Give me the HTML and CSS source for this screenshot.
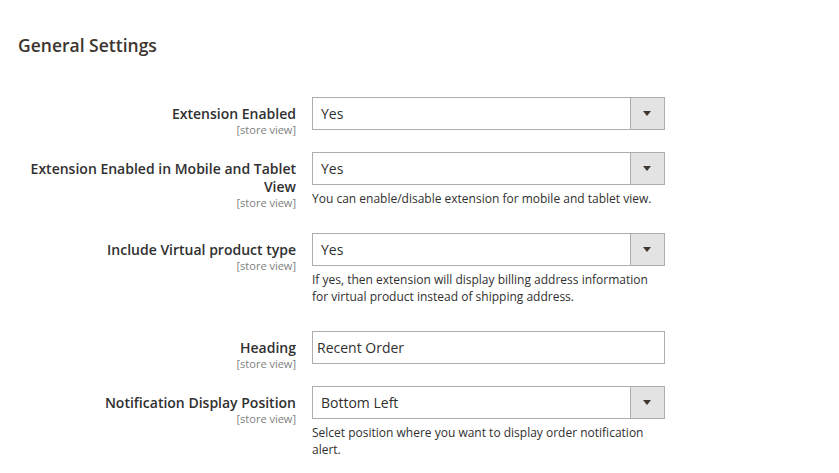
FILE: index.html
```html
<!DOCTYPE html>
<html>
<head>
<meta charset="utf-8">
<link rel="stylesheet" href="styles.css">
</head>
<body>
<div class="page">
  <h2 class="section-title">General Settings</h2>
  <div class="fields">
    <div class="row">
      <div class="label"><span class="label-text">Extension Enabled</span><span class="scope">[store view]</span></div>
      <div class="control">
        <div class="select"><span class="value">Yes</span><span class="arrow"></span></div>
      </div>
    </div>
    <div class="row">
      <div class="label"><span class="label-text">Extension Enabled in Mobile and Tablet View</span><span class="scope">[store view]</span></div>
      <div class="control">
        <div class="select"><span class="value">Yes</span><span class="arrow"></span></div>
        <div class="note">You can enable/disable extension for mobile and tablet view.</div>
      </div>
    </div>
    <div class="row">
      <div class="label"><span class="label-text">Include Virtual product type</span><span class="scope">[store view]</span></div>
      <div class="control">
        <div class="select"><span class="value">Yes</span><span class="arrow"></span></div>
        <div class="note">If yes, then extension will display billing address information for virtual product instead of shipping address.</div>
      </div>
    </div>
    <div class="row">
      <div class="label"><span class="label-text">Heading</span><span class="scope">[store view]</span></div>
      <div class="control">
        <div class="input">Recent Order</div>
      </div>
    </div>
    <div class="row">
      <div class="label"><span class="label-text">Notification Display Position</span><span class="scope">[store view]</span></div>
      <div class="control">
        <div class="select"><span class="value">Bottom Left</span><span class="arrow"></span></div>
        <div class="note">Selcet position where you want to display order notification alert.</div>
      </div>
    </div>
  </div>
</div>
</body>
</html>
```
FILE: styles.css
```css
html, body {
  margin: 0;
  padding: 0;
  background: #ffffff;
}
body {
  font-family: "Open Sans", "Liberation Sans", sans-serif;
  color: #303030;
}
.page {
  padding: 0 18px;
}
.section-title {
  margin: 0;
  padding-top: 34px;
  font-size: 17.5px;
  line-height: 22px;
  font-weight: 600;
  color: #3d3530;
}
.fields {
  margin-top: 41px;
  display: flex;
  flex-direction: column;
}
.row {
  display: flex;
  align-items: flex-start;
  margin-bottom: 22px;
}
.label {
  width: 268px;
  margin-left: 10px;
  padding-top: 8px;
  margin-bottom: -16px;
  text-align: right;
  display: flex;
  flex-direction: column;
}
.label-text {
  font-size: 14px;
  line-height: 18px;
  font-weight: 600;
  color: #303030;
}
.scope {
  font-size: 11px;
  line-height: 14px;
  color: #808080;
}
.control {
  margin-left: 16px;
  width: 353px;
}
.select {
  box-sizing: border-box;
  height: 33px;
  border: 1px solid #adadad;
  display: flex;
  align-items: center;
  background: #ffffff;
}
.value {
  flex: 1;
  padding-left: 8px;
  font-size: 14px;
  color: #303030;
}
.arrow {
  width: 33px;
  height: 31px;
  background: #e3e3e3;
  border-left: 1px solid #adadad;
  position: relative;
}
.arrow::after {
  content: "";
  position: absolute;
  left: 12px;
  top: 13px;
  border-left: 4px solid transparent;
  border-right: 4px solid transparent;
  border-top: 5px solid #41362f;
}
.input {
  box-sizing: border-box;
  height: 33px;
  border: 1px solid #adadad;
  padding-left: 4px;
  font-size: 14px;
  line-height: 31px;
  color: #303030;
}
.note {
  margin-top: 5px;
  margin-bottom: 4px;
  font-size: 12px;
  line-height: 17px;
  color: #303030;
}
```
